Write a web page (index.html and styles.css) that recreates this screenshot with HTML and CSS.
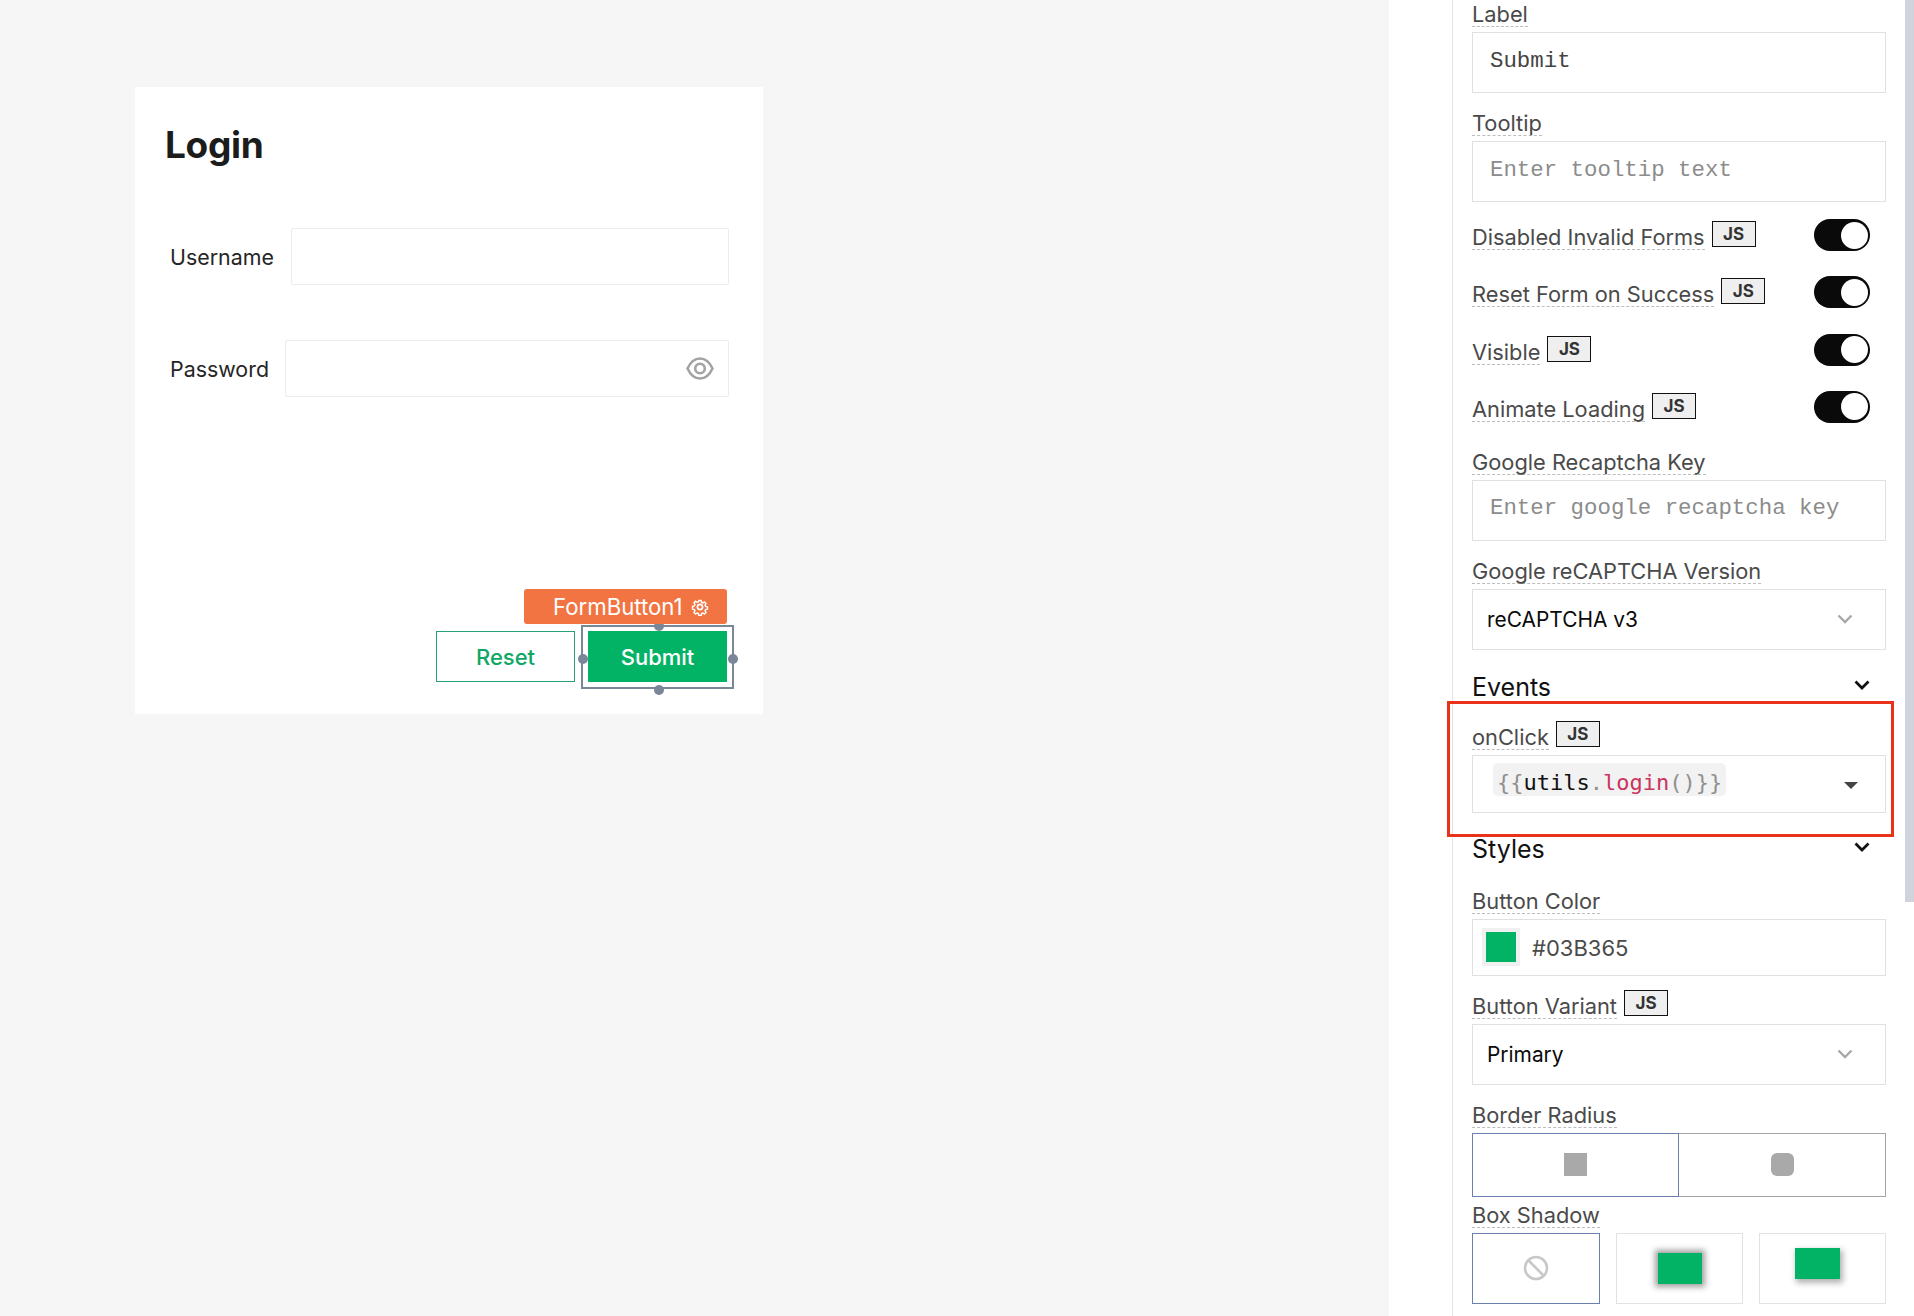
FILE: index.html
```html
<!DOCTYPE html>
<html lang="en">
<head>
<meta charset="utf-8">
<title>Login form editor</title>
<link rel="stylesheet" href="styles.css">
</head>
<body>
<div class="app">
  <main class="canvas">
    <section class="card">
      <h1 class="card-title">Login</h1>
      <div class="form-row first">
        <label class="form-label">Username</label>
        <div class="form-input"></div>
      </div>
      <div class="form-row second">
        <label class="form-label">Password</label>
        <div class="form-input">
          <svg class="eye" viewBox="0 0 28 23" width="28" height="23"><path d="M1.500 11.500C4.500 5 9 1.500 14 1.500S23.500 5 26.500 11.500C23.500 18 19 21.500 14 21.500S4.500 18 1.500 11.500Z" fill="none" stroke="#a3a3a3" stroke-width="2.600"/><circle cx="14" cy="11.500" r="4.800" fill="none" stroke="#a3a3a3" stroke-width="2.600"/></svg>
        </div>
      </div>
      <div class="form-footer">
        <button class="btn btn-outline">Reset</button>
        <div class="selected">
          <button class="btn btn-solid">Submit</button>
          <div class="sel-frame"></div>
          <span class="handle h-top"></span>
          <span class="handle h-left"></span>
          <span class="handle h-right"></span>
          <span class="handle h-bottom"></span>
          <div class="tag">FormButton1
            <svg class="gear" viewBox="0 0 16 16" width="18" height="18"><circle cx="8" cy="8" r="2.300" fill="none" stroke="#fff" stroke-width="1.500"/><path d="M6.800 1.200h2.400l.4 1.900 1.300.6 1.700-1 1.600 1.700-1 1.600.6 1.400 1.900.4v2.400l-1.900.4-.6 1.300 1 1.700-1.600 1.600-1.700-1-1.300.6-.4 1.900H6.800l-.4-1.900-1.300-.6-1.700 1-1.600-1.600 1-1.700-.6-1.300-1.900-.4V7.200l1.900-.4.6-1.400-1-1.600 1.600-1.700 1.700 1 1.300-.6z" transform="translate(8 8) scale(.86) translate(-8 -8)" fill="none" stroke="#fff" stroke-width="1.500"/></svg>
          </div>
        </div>
      </div>
    </section>
  </main>
  <aside class="panel">
    <div class="panel-gutter"></div>
    <div class="panel-body">
      <div class="field top">
        <div class="lbl-row"><span class="lbl">Label</span></div>
        <div class="box mono value">Submit</div>
      </div>
      <div class="field">
        <div class="lbl-row"><span class="lbl">Tooltip</span></div>
        <div class="box mono placeholder">Enter tooltip text</div>
      </div>
      <div class="toggles">
        <div class="toggle-row"><div class="lbl-inline"><span class="lbl">Disabled Invalid Forms</span><span class="js">JS</span></div><span class="switch"></span></div>
        <div class="toggle-row"><div class="lbl-inline"><span class="lbl">Reset Form on Success</span><span class="js">JS</span></div><span class="switch"></span></div>
        <div class="toggle-row"><div class="lbl-inline"><span class="lbl">Visible</span><span class="js">JS</span></div><span class="switch"></span></div>
        <div class="toggle-row"><div class="lbl-inline"><span class="lbl">Animate Loading</span><span class="js">JS</span></div><span class="switch"></span></div>
      </div>
      <div class="field recaptcha">
        <div class="lbl-row"><span class="lbl">Google Recaptcha Key</span></div>
        <div class="box mono placeholder">Enter google recaptcha key</div>
      </div>
      <div class="field">
        <div class="lbl-row"><span class="lbl">Google reCAPTCHA Version</span></div>
        <div class="box select">reCAPTCHA v3
          <svg class="sel-chev" viewBox="0 0 16 10" width="16" height="10"><path d="M1.500 1.500 8 8l6.500-6.500" fill="none" stroke="#a8a8a8" stroke-width="2.400"/></svg>
        </div>
      </div>
      <div class="section events">Events
        <svg class="sec-chev" viewBox="0 0 16 10" width="16" height="10"><path d="M1.500 1.500 8 8l6.500-6.500" fill="none" stroke="#111" stroke-width="2.800"/></svg>
      </div>
      <div class="field onclick">
        <div class="lbl-row"><span class="lbl">onClick</span><span class="js">JS</span></div>
        <div class="box code-box">
          <span class="chip"><i class="c-g">{{</i><i class="c-b">utils</i><i class="c-g">.</i><i class="c-r">login</i><i class="c-g">()}}</i></span>
          <span class="caret"></span>
        </div>
      </div>
      <div class="section styles-head">Styles
        <svg class="sec-chev" viewBox="0 0 16 10" width="16" height="10"><path d="M1.500 1.500 8 8l6.500-6.500" fill="none" stroke="#111" stroke-width="2.800"/></svg>
      </div>
      <div class="field color">
        <div class="lbl-row"><span class="lbl">Button Color</span></div>
        <div class="box color-box"><span class="swatch"><span class="swatch-fill"></span></span>#03B365</div>
      </div>
      <div class="field variant">
        <div class="lbl-row"><span class="lbl">Button Variant</span><span class="js">JS</span></div>
        <div class="box select">Primary
          <svg class="sel-chev" viewBox="0 0 16 10" width="16" height="10"><path d="M1.500 1.500 8 8l6.500-6.500" fill="none" stroke="#a8a8a8" stroke-width="2.400"/></svg>
        </div>
      </div>
      <div class="field">
        <div class="lbl-row"><span class="lbl">Border Radius</span></div>
        <div class="radius-group">
          <div class="radius-opt active"><span class="sq"></span></div>
          <div class="radius-opt"><span class="sq round"></span></div>
        </div>
      </div>
      <div class="field shadow">
        <div class="lbl-row"><span class="lbl">Box Shadow</span></div>
        <div class="shadow-group">
          <div class="shadow-opt active">
            <svg viewBox="0 0 26 26" width="26" height="26"><circle cx="13" cy="13" r="11" fill="none" stroke="#c8c8c8" stroke-width="2.600"/><path d="M5.500 5.500l15 15" stroke="#c8c8c8" stroke-width="2.600"/></svg>
          </div>
          <div class="shadow-opt"><span class="sh sh-a"></span></div>
          <div class="shadow-opt"><span class="sh sh-b"></span></div>
        </div>
      </div>
    </div>
    <div class="scrollbar"></div>
    <div class="highlight"></div>
  </aside>
</div>
</body>
</html>
```
FILE: styles.css
```css
* { box-sizing: border-box; }
html, body { margin: 0; height: 100%; }
body { font-family: Inter, "Liberation Sans", sans-serif; overflow: hidden; background: #f6f6f6; }
.app { display: flex; width: 1914px; height: 1316px; overflow: hidden; }

/* canvas */
.canvas { width: 1389px; flex: none; background: #f6f6f6; padding: 87px 0 0 135px; }
.card { width: 628px; height: 627px; background: #fff; padding: 36px 34px 32px 30px; display: flex; flex-direction: column; }
.card-title { margin: 0; font-size: 37px; line-height: 44px; font-weight: 700; letter-spacing: -0.3px; color: #1c1c1c; }
.form-row { display: flex; align-items: center; height: 57px; padding-left: 5px; gap: 16px; }
.form-row.first { margin-top: 61px; gap: 17px; }
.form-row.second { margin-top: 55px; }
.form-label { font-size: 21.400px; color: #262626; }
.form-input { flex: 1; height: 100%; border: 1px solid #ececec; border-radius: 2px; display: flex; align-items: center; justify-content: flex-end; padding-right: 14px; }
.form-footer { margin-top: auto; display: flex; justify-content: flex-end; gap: 13px; padding-right: 2px; }
.btn { width: 139px; height: 51px; font: 500 22px Inter, sans-serif; border-radius: 0; padding: 0; }
.btn-outline { background: #fff; border: 1px solid #26a07a; color: #10a765; }
.btn-solid { background: #03b365; border: 0; color: #fff; display: block; }
.selected { position: relative; }
.sel-frame { position: absolute; inset: -6px -7px -7px -7px; border: 2px solid #7a8798; }
.handle { position: absolute; width: 10px; height: 10px; border-radius: 50%; background: #7a8798; }
.h-top { top: -10px; left: 66px; }
.h-bottom { bottom: -13px; left: 66px; }
.h-left { left: -10px; top: 23px; }
.h-right { right: -11px; top: 23px; }
.tag { position: absolute; top: -42px; right: 0; width: 203px; height: 35px; background: #f17442; color: #fff; border-radius: 3px; font-size: 22.200px; font-weight: 400; display: flex; align-items: center; padding-left: 29px; gap: 8px; white-space: nowrap; }

/* panel */
.panel { position: relative; flex: 1; display: flex; background: #fff; overflow: hidden; }
.panel-gutter { width: 64px; flex: none; border-right: 1px solid #e4e4e4; }
.panel-body { width: 433px; flex: none; padding-left: 19px; }
.scrollbar { position: absolute; right: 0; top: 0; width: 9px; height: 902px; background: #d0d3dc; }
.highlight { position: absolute; left: 58px; top: 701px; width: 447px; height: 136px; border: 3.500px solid #e8321a; }

.field { margin-top: 16px; }
.field.top { margin-top: 0; }
.field.recaptcha { margin-top: 25px; }
.field.onclick { margin-top: 21px; }
.field.color { margin-top: 23px; }
.field.shadow { margin-top: 4px; }
.lbl-row { height: 27px; display: flex; align-items: flex-end; gap: 7px; margin-bottom: 5px; }
.lbl { font-size: 21.800px; line-height: 24px; color: #4a4a4a; border-bottom: 1px dashed #bdbdbd; white-space: nowrap; display: block; }
.js { width: 44px; height: 26px; margin-bottom: 3px; background: #efefef; border: 1.500px solid #111; display: flex; align-items: center; justify-content: center; font-size: 17px; font-weight: 700; color: #333; }
.box { width: 414px; height: 61px; border: 1.500px solid #e0e0e0; display: flex; align-items: center; }
.mono { font-family: "Liberation Mono", monospace; font-size: 22.400px; padding: 0 0 4px 17px; }
.value { color: #444; }
.placeholder { color: #8c8c8c; }
.select { justify-content: space-between; padding: 0 32px 0 14px; font-size: 20.900px; color: #0a0a0a; }

.toggles { margin-top: 17px; display: flex; flex-direction: column; gap: 25.330px; width: 414px; }
.toggle-row { height: 32px; display: flex; justify-content: space-between; padding-right: 16px; }
.lbl-inline { display: flex; align-items: flex-end; gap: 7px; padding-bottom: 1px; }
.lbl-inline .js { margin-bottom: 3px; }
.switch { position: relative; width: 56px; height: 32px; border-radius: 16px; background: #0a0a0a; }
.switch::after { content: ""; position: absolute; right: 2px; top: 2.500px; width: 27px; height: 27px; border-radius: 50%; background: #fff; }

.section { display: flex; justify-content: space-between; align-items: center; height: 30px; font-size: 25px; font-weight: 400; color: #111; width: 414px; padding-right: 16px; }
.section .sec-chev { margin-top: -3px; }
.section.events { margin-top: 22px; }
.section.styles-head { margin-top: 21px; }

.code-box { height: 58px; justify-content: space-between; padding: 0 27px 9px 20px; }
.chip { background: #f2f2f2; border-radius: 5px; height: 33px; padding: 7px 4px 0; display: flex; align-items: center; font-family: "DejaVu Sans Mono", monospace; font-size: 22px; }
.chip i { font-style: normal; }
.c-g { color: #8f8f8f; }
.c-b { color: #111; }
.c-r { color: #c9355f; }
.caret { width: 0; height: 0; border-left: 7px solid transparent; border-right: 7px solid transparent; border-top: 7px solid #444; margin-top: 13px; }

.color-box { height: 57px; padding-left: 9px; gap: 12px; font-size: 22px; color: #4a4a4a; padding-top: 1px; }
.swatch { width: 38px; height: 38px; background: #f0f0f0; display: flex; align-items: center; justify-content: center; margin-top: -1px; }
.swatch-fill { width: 30px; height: 30px; background: #03b365; }

.radius-group { display: flex; width: 414px; height: 64px; }
.radius-opt { width: 50%; display: flex; align-items: center; justify-content: center; border: 1.500px solid #a3a3a3; border-left: 0; }
.radius-opt.active { border: 1.500px solid #6b80aa; }
.sq { width: 23px; height: 23px; background: #a9a9a9; }
.sq.round { border-radius: 6px; }

.shadow-group { display: flex; gap: 16px; width: 414px; height: 71px; }
.shadow-opt { width: 127px; border: 1.500px solid #e2e2e2; display: flex; align-items: center; justify-content: center; }
.shadow-opt.active { width: 128px; border-color: #6b80aa; }
.sh { width: 44px; height: 31px; background: #03b365; }
.sh-a { box-shadow: 0 0 6px 3px rgba(0, 0, 0, .38); }
.sh-b { width: 45px; box-shadow: 2px 3px 6px 1px rgba(0, 0, 0, .3); margin: -9px 10px 0 0; }
```
